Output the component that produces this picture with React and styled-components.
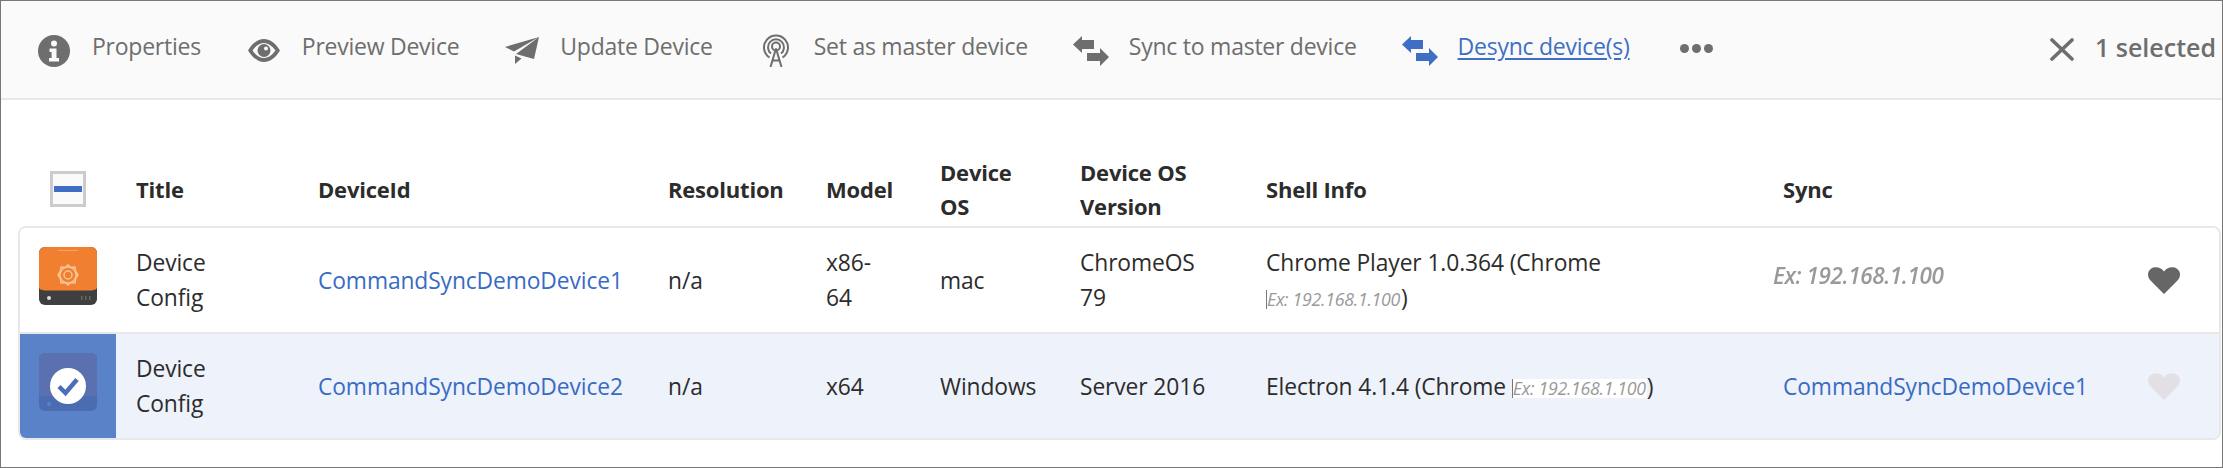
import React from "react";
import styled, { createGlobalStyle } from "styled-components";

const Global = createGlobalStyle`
  html, body { margin: 0; padding: 0; background: #fff; }
  body { font-family: "Open Sans", "Noto Sans", sans-serif; }
`;

const COLUMNS = "96px 182px 350px 158px 114px 140px 186px 517px 357px 88px 1fr";

const Page = styled.div`
  width: 2223px;
  height: 468px;
  box-sizing: border-box;
  border: 1px solid #777;
  overflow: hidden;
  background: #fff;
`;

const Toolbar = styled.div`
  height: 97px;
  border-bottom: 2px solid #e8e8e8;
  background: #fafafa;
  display: flex;
  align-items: center;
  gap: 45px;
  padding: 0 6px 0 35px;
`;

const ToolItem = styled.a`
  display: flex;
  align-items: center;
  gap: 20px;
  font-size: 23px;
  letter-spacing: -0.25px;
  white-space: nowrap;
  color: ${(p) => (p.$active ? "#3f6fc4" : "#6e6e6e")};
  text-decoration: ${(p) => (p.$active ? "underline" : "none")};
  text-underline-offset: 3px;
  span { position: relative; top: -4px; }
`;

const IconBox = styled.div`
  width: 36px;
  height: 36px;
  display: flex;
  align-items: center;
  justify-content: center;
  flex: none;
  position: relative;
  top: 1px;
  svg { flex: none; display: block; }
`;

const Dots = styled.div`
  display: flex;
  gap: 3px;
  align-self: center;
  margin: -2px 0 0 5px;
`;

const Dot = styled.i`
  width: 9px;
  height: 9px;
  border-radius: 50%;
  background: #6e6e6e;
`;

const Selection = styled.div`
  margin-left: auto;
  display: flex;
  align-items: center;
  gap: 21px;
  color: #6e6e6e;
  font-size: 25px;
  font-weight: 600;
  white-space: nowrap;
  span { position: relative; top: -3px; }
`;

const TableWrap = styled.div`
  padding: 55px 1px 0 17px;
`;

const HeaderRow = styled.div`
  display: grid;
  grid-template-columns: ${COLUMNS};
  align-items: center;
  height: 68px;
  margin: 0 2px 3px;
`;

const HeaderCell = styled.div`
  padding-left: 20px;
  font-size: 22px;
  line-height: 34px;
  font-weight: 700;
  letter-spacing: -0.2px;
  color: #2c2c2c;
  max-width: ${(p) => (p.$wrap ? `${p.$wrap}px` : "none")};
`;

const Check = styled.div`
  width: 36px;
  height: 36px;
  box-sizing: border-box;
  border: 3px solid #ccc;
  background: #fafafa;
  margin: 0 auto;
  display: flex;
  align-items: center;
  justify-content: center;
  &::before {
    content: "";
    width: 28px;
    height: 6px;
    background: #3f6fc4;
  }
`;

const RowBox = styled.div`
  border: 2px solid #e8e8e8;
  border-radius: 8px;
  overflow: hidden;
`;

const Row = styled.div`
  display: grid;
  grid-template-columns: ${COLUMNS};
  align-items: center;
  height: 104px;
  background: ${(p) => (p.$selected ? "#eef2fa" : "#fff")};
  & + & { border-top: 2px solid #e8e8e8; }
`;

const ThumbCell = styled.div`
  align-self: stretch;
  display: flex;
  align-items: flex-start;
  justify-content: center;
  padding-top: 19px;
  background: ${(p) => (p.$selected ? "#5a82c9" : "transparent")};
`;

const Cell = styled.div`
  padding-left: 20px;
  font-size: 22.8px;
  line-height: 35px;
  letter-spacing: -0.1px;
  color: #2c2c2c;
  max-width: ${(p) => (p.$wrap ? `${p.$wrap}px` : "none")};
`;

const DeviceLink = styled.a`
  color: #3a6bc4;
  white-space: nowrap;
`;

const ShellText = styled.div`
  max-width: 400px;
`;

const Hint = styled.span`
  display: inline-block;
  font-size: 17.8px;
  line-height: 19px;
  font-style: italic;
  letter-spacing: -0.3px;
  color: #999;
  background: #fff;
  border-left: 1px solid #777;
  white-space: nowrap;
  padding-right: 1px;
`;

const SyncHint = styled.div`
  margin-left: -10px;
  margin-top: -8px;
  font-size: 22.5px;
  line-height: 26px;
  font-style: italic;
  font-weight: 600;
  letter-spacing: -0.4px;
  color: #999;
  filter: blur(0.5px);
  white-space: nowrap;
`;

const HeartCell = styled.div`
  display: flex;
  justify-content: center;
  color: ${(p) => (p.$muted ? "#e3e0e5" : "#666")};
`;

const Grey = "#6e6e6e";

const InfoIcon = () => (
  <svg width="32" height="32" viewBox="0 0 32 32">
    <circle cx="16" cy="16" r="16" fill={Grey} />
    <circle cx="16" cy="8.500" r="3" fill="#fafafa" />
    <path d="M11.500 13.500h7v9.500h2.500v3.500H11V23h2.600v-6H11.500z" fill="#fafafa" />
  </svg>
);

const EyeIcon = () => (
  <svg width="32" height="23" viewBox="0 0 32 23">
    <path fillRule="evenodd" fill={Grey} d="M0 11.500C5 3.500 10.500 0 16 0s11 3.500 16 11.500C27 19.500 21.500 23 16 23S5 19.500 0 11.500zM4.500 11.500C8 16.500 12 19 16 19s8-2.500 11.500-7.500C24 6.500 20 4 16 4S8 6.500 4.500 11.500z" />
    <circle cx="16" cy="11.500" r="6.500" fill={Grey} />
    <circle cx="18" cy="9.500" r="2" fill="#fafafa" />
  </svg>
);

const PlaneIcon = () => (
  <svg width="34" height="27" viewBox="0 0 34 27">
    <path fill={Grey} d="M0 10 34 0 9 14.500zM34 0 11 17l18 5zM10 18.500V27l6.500-5.500z" />
  </svg>
);

const BroadcastIcon = () => (
  <svg width="26" height="33" viewBox="0 0 26 33" fill="none" stroke={Grey} strokeWidth="2">
    <path d="M6.500 23.500a12 12 0 1 1 13 0" />
    <path d="M8 19.500a8 8 0 1 1 10 0" />
    <circle cx="13" cy="12.500" r="4" />
    <path d="M13 14.500 7.500 33M13 14.500 18.500 33M9.500 26.500h7" />
  </svg>
);

const ArrowsIcon = ({ color }) => (
  <svg width="36" height="30" viewBox="0 0 36 30">
    <path fill={color} d="M0 8.500 9 0v4h12v9H9v4zM36 21l-9-9v5H14v8h13v5z" />
  </svg>
);

const CloseIcon = () => (
  <svg width="24" height="23" viewBox="0 0 24 23" fill="none" stroke={Grey} strokeWidth="3.600" strokeLinecap="round">
    <path d="M2 2l20 19M22 2 2 21" />
  </svg>
);

const Heart = () => (
  <svg width="32" height="27" viewBox="0 0 32 27" fill="currentColor">
    <path d="M16 27 3 14C-1 10-1 4.500 3 1.800 7-.8 12.500 0 16 4.500 19.500 0 25-.8 29 1.800c4 2.700 4 8.200 0 12.200z" />
  </svg>
);

const OrangeThumb = () => (
  <svg width="58" height="58" viewBox="0 0 58 58">
    <rect width="58" height="58" rx="6" fill="#3f3f3f" />
    <path d="M0 6a6 6 0 0 1 6-6h46a6 6 0 0 1 6 6v34c0 2.500-2 3-6 3.500H6c-4-.5-6-1-6-3.500z" fill="#f08030" />
    <rect x="19" y="3" width="20" height="1" fill="#f5a468" />
    <g fill="none" stroke="#f9c497" strokeWidth="1.500">
      <circle cx="29" cy="28" r="4" />
      <circle cx="29" cy="28" r="8" />
      <path d="M29 18l3 2.500 4-.5.5 4 2.500 4-2.500 4-.5 4-4-.5-3 2.500-3-2.500-4 .5-.5-4-2.500-4 2.500-4 .5-4 4 .5z" />
    </g>
    <circle cx="10" cy="51" r="2" fill="#ddd" />
    <path d="M42 49h1.500v4H42zM46 49h1.500v4H46zM50 49h1.500v4H50z" fill="#666" />
  </svg>
);

const SelectedThumb = () => (
  <svg width="58" height="58" viewBox="0 0 58 58">
    <rect width="58" height="58" rx="6" fill="#4b6cb0" />
    <path d="M0 6a6 6 0 0 1 6-6h46a6 6 0 0 1 6 6v34c0 2.500-2 3-6 3.500H6c-4-.5-6-1-6-3.500z" fill="#5b70ae" />
    <circle cx="10" cy="51" r="2" fill="#5a82c9" />
    <circle cx="29" cy="33" r="18" fill="#fff" />
    <path d="M20 33.500l6.500 6.500L38 26.500" fill="none" stroke="#4a6fb8" strokeWidth="4.500" />
  </svg>
);

const tools = [
  { label: "Properties", icon: <InfoIcon /> },
  { label: "Preview Device", icon: <EyeIcon /> },
  { label: "Update Device", icon: <PlaneIcon /> },
  { label: "Set as master device", icon: <BroadcastIcon /> },
  { label: "Sync to master device", icon: <ArrowsIcon color={Grey} /> },
  { label: "Desync device(s)", icon: <ArrowsIcon color="#3f6fc4" />, active: true },
];

const headers = [
  { label: "Title" },
  { label: "DeviceId" },
  { label: "Resolution" },
  { label: "Model" },
  { label: "Device OS", wrap: 90 },
  { label: "Device OS Version", wrap: 140 },
  { label: "Shell Info" },
  { label: "Sync" },
];

export default function App() {
  return (
    <Page>
      <Global />
      <Toolbar>
        {tools.map((t) => (
          <ToolItem key={t.label} $active={t.active}>
            <IconBox>{t.icon}</IconBox>
            <span>{t.label}</span>
          </ToolItem>
        ))}
        <Dots><Dot /><Dot /><Dot /></Dots>
        <Selection>
          <CloseIcon />
          <span>1 selected</span>
        </Selection>
      </Toolbar>
      <TableWrap>
        <HeaderRow>
          <Check />
          {headers.map((h) => (
            <HeaderCell key={h.label} $wrap={h.wrap}>{h.label}</HeaderCell>
          ))}
        </HeaderRow>
        <RowBox>
          <Row>
            <ThumbCell><OrangeThumb /></ThumbCell>
            <Cell $wrap={110}>Device Config</Cell>
            <Cell><DeviceLink>CommandSyncDemoDevice1</DeviceLink></Cell>
            <Cell>n/a</Cell>
            <Cell $wrap={70}>x86-<wbr />64</Cell>
            <Cell>mac</Cell>
            <Cell $wrap={130}>ChromeOS 79</Cell>
            <Cell><ShellText>Chrome Player 1.0.364 (Chrome <Hint>Ex: 192.168.1.100</Hint>)</ShellText></Cell>
            <Cell><SyncHint>Ex: 192.168.1.100</SyncHint></Cell>
            <HeartCell><Heart /></HeartCell>
          </Row>
          <Row $selected>
            <ThumbCell $selected><SelectedThumb /></ThumbCell>
            <Cell $wrap={110}>Device Config</Cell>
            <Cell><DeviceLink>CommandSyncDemoDevice2</DeviceLink></Cell>
            <Cell>n/a</Cell>
            <Cell>x64</Cell>
            <Cell>Windows</Cell>
            <Cell>Server 2016</Cell>
            <Cell><ShellText>Electron 4.1.4 (Chrome <Hint>Ex: 192.168.1.100</Hint>)</ShellText></Cell>
            <Cell><DeviceLink>CommandSyncDemoDevice1</DeviceLink></Cell>
            <HeartCell $muted><Heart /></HeartCell>
          </Row>
        </RowBox>
      </TableWrap>
    </Page>
  );
}
